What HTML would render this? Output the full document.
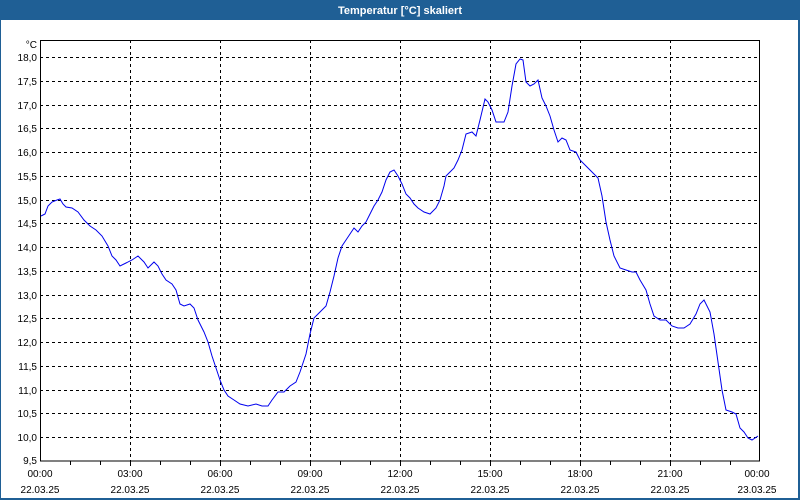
<!DOCTYPE html>
<html><head><meta charset="utf-8"><style>
html,body{margin:0;padding:0;width:800px;height:500px;overflow:hidden;background:#fff;font-family:"Liberation Sans",sans-serif}
</style></head><body>
<svg width="800" height="500" xmlns="http://www.w3.org/2000/svg" style="position:absolute;left:0;top:0">
<rect x="0" y="0" width="800" height="500" fill="#1f5f95"/>
<rect x="1" y="20" width="797" height="478" fill="#fff"/>
<text x="400" y="14" font-size="11" font-weight="bold" fill="#fff" text-anchor="middle">Temperatur [°C] skaliert</text>
<g stroke="#000" stroke-width="1" stroke-dasharray="3,3" shape-rendering="crispEdges">
<line x1="40" x2="760" y1="57.5" y2="57.5"/><line x1="40" x2="760" y1="81.5" y2="81.5"/><line x1="40" x2="760" y1="105.5" y2="105.5"/><line x1="40" x2="760" y1="128.5" y2="128.5"/><line x1="40" x2="760" y1="152.5" y2="152.5"/><line x1="40" x2="760" y1="176.5" y2="176.5"/><line x1="40" x2="760" y1="200.5" y2="200.5"/><line x1="40" x2="760" y1="223.5" y2="223.5"/><line x1="40" x2="760" y1="247.5" y2="247.5"/><line x1="40" x2="760" y1="271.5" y2="271.5"/><line x1="40" x2="760" y1="295.5" y2="295.5"/><line x1="40" x2="760" y1="318.5" y2="318.5"/><line x1="40" x2="760" y1="342.5" y2="342.5"/><line x1="40" x2="760" y1="366.5" y2="366.5"/><line x1="40" x2="760" y1="390.5" y2="390.5"/><line x1="40" x2="760" y1="413.5" y2="413.5"/><line x1="40" x2="760" y1="437.5" y2="437.5"/>
<line x1="130.5" x2="130.5" y1="40" y2="461"/><line x1="220.5" x2="220.5" y1="40" y2="461"/><line x1="310.5" x2="310.5" y1="40" y2="461"/><line x1="400.5" x2="400.5" y1="40" y2="461"/><line x1="490.5" x2="490.5" y1="40" y2="461"/><line x1="580.5" x2="580.5" y1="40" y2="461"/><line x1="670.5" x2="670.5" y1="40" y2="461"/>
</g>
<rect x="40.5" y="40.5" width="719" height="420.5" fill="none" stroke="#000" shape-rendering="crispEdges"/>
<g stroke="#000" shape-rendering="crispEdges">
<line x1="70.5" x2="70.5" y1="461" y2="465"/><line x1="100.5" x2="100.5" y1="461" y2="465"/><line x1="130.5" x2="130.5" y1="461" y2="466"/><line x1="160.5" x2="160.5" y1="461" y2="465"/><line x1="190.5" x2="190.5" y1="461" y2="465"/><line x1="220.5" x2="220.5" y1="461" y2="466"/><line x1="250.5" x2="250.5" y1="461" y2="465"/><line x1="280.5" x2="280.5" y1="461" y2="465"/><line x1="310.5" x2="310.5" y1="461" y2="466"/><line x1="340.5" x2="340.5" y1="461" y2="465"/><line x1="370.5" x2="370.5" y1="461" y2="465"/><line x1="400.5" x2="400.5" y1="461" y2="466"/><line x1="430.5" x2="430.5" y1="461" y2="465"/><line x1="460.5" x2="460.5" y1="461" y2="465"/><line x1="490.5" x2="490.5" y1="461" y2="466"/><line x1="520.5" x2="520.5" y1="461" y2="465"/><line x1="550.5" x2="550.5" y1="461" y2="465"/><line x1="580.5" x2="580.5" y1="461" y2="466"/><line x1="610.5" x2="610.5" y1="461" y2="465"/><line x1="640.5" x2="640.5" y1="461" y2="465"/><line x1="670.5" x2="670.5" y1="461" y2="466"/><line x1="700.5" x2="700.5" y1="461" y2="465"/><line x1="730.5" x2="730.5" y1="461" y2="465"/>
</g>
<g font-size="10" fill="#000" text-anchor="end">
<text x="37" y="48">°C</text>
<text x="37" y="61">18,0</text><text x="37" y="85">17,5</text><text x="37" y="109">17,0</text><text x="37" y="132">16,5</text><text x="37" y="156">16,0</text><text x="37" y="180">15,5</text><text x="37" y="204">15,0</text><text x="37" y="227">14,5</text><text x="37" y="251">14,0</text><text x="37" y="275">13,5</text><text x="37" y="299">13,0</text><text x="37" y="322">12,5</text><text x="37" y="346">12,0</text><text x="37" y="370">11,5</text><text x="37" y="394">11,0</text><text x="37" y="417">10,5</text><text x="37" y="441">10,0</text><text x="37" y="464">9,5</text>
</g>
<g font-size="10" fill="#000" text-anchor="middle">
<text x="40" y="477">00:00</text><text x="40" y="493">22.03.25</text>
<text x="130" y="477">03:00</text><text x="130" y="493">22.03.25</text>
<text x="220" y="477">06:00</text><text x="220" y="493">22.03.25</text>
<text x="310" y="477">09:00</text><text x="310" y="493">22.03.25</text>
<text x="400" y="477">12:00</text><text x="400" y="493">22.03.25</text>
<text x="490" y="477">15:00</text><text x="490" y="493">22.03.25</text>
<text x="580" y="477">18:00</text><text x="580" y="493">22.03.25</text>
<text x="670" y="477">21:00</text><text x="670" y="493">22.03.25</text>
<text x="757" y="477">00:00</text><text x="757" y="493">23.03.25</text>
</g>
<polyline fill="none" stroke="#0000ee" stroke-width="1" points="41,216 45,214 48,206 52,202 57,200 60,199 63,204 66,207 72,208 78,212 84,220 90,226 96,230 102,236 108,246 112,256 116,260 120,266 126,263 132,260 138,256 144,262 148,268 154,262 158,266 162,274 166,280 172,284 176,290 180,304 184,306 190,304 194,308 198,320 204,332 208,342 212,356 216,368 220,380 224,390 228,396 234,400 240,404 248,406 256,404 262,406 268,406 272,400 278,392 284,392 290,386 296,382 300,372 306,354 310,334 314,318 320,312 326,306 330,292 334,276 338,258 342,246 346,240 350,234 354,228 358,232 362,226 366,222 370,214 374,206 378,200 382,192 386,180 390,172 394,170 398,176 402,184 406,194 410,198 414,204 418,208 424,212 430,214 436,208 440,200 444,186 446,176 450,172 454,168 458,160 462,150 466,134 472,132 476,136 480,120 485,99 488,102 492,110 496,122 500,122 504,122 508,112 512,86 516,64 520,59 523,60 526,82 530,86 534,84 538,80 542,98 546,106 550,116 554,130 558,142 562,138 566,140 570,150 576,152 580,160 586,166 592,172 598,178 602,196 606,222 610,240 614,256 620,268 626,270 632,272 636,272 640,280 646,290 650,304 654,316 660,320 666,320 672,326 678,328 684,328 690,324 696,314 700,304 704,300 710,312 714,334 718,362 722,390 726,410 732,412 736,414 740,428 744,432 748,438 752,440 758,436"/>
</svg>
</body></html>
